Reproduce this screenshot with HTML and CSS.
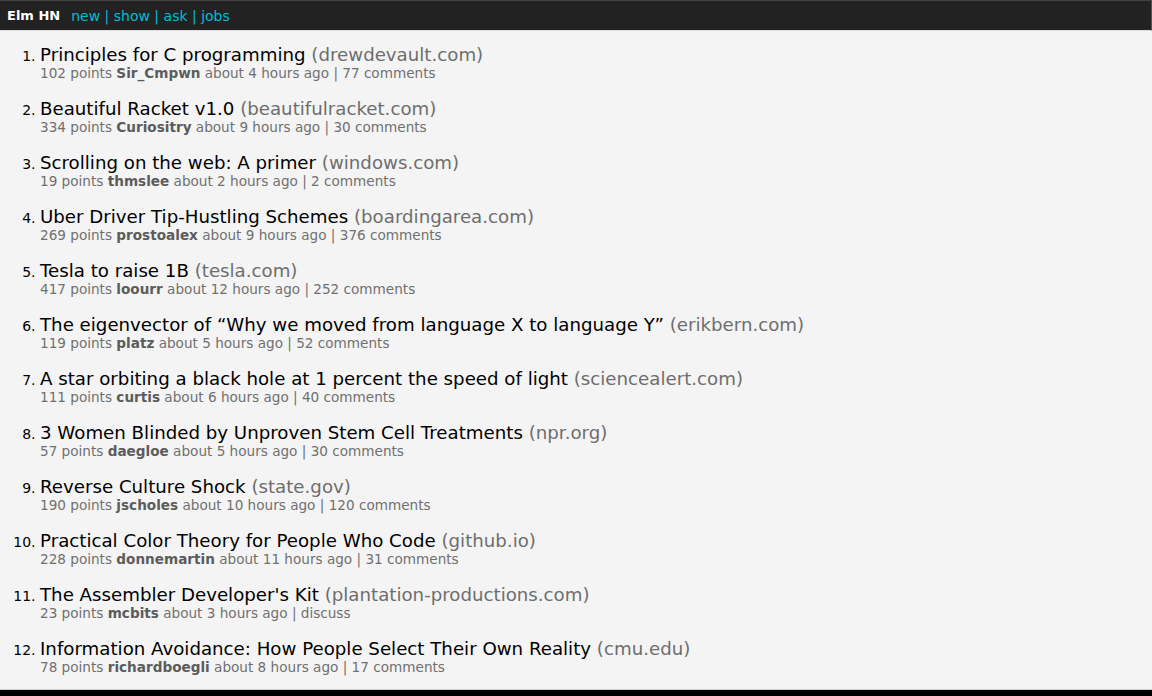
FILE: index.html
```html
<!DOCTYPE html>
<html>
<head>
<meta charset="utf-8">
<link rel="stylesheet" href="styles.css">
</head>
<body>
<header class="topbar">
  <span class="brand">Elm HN</span>
  <nav class="nav"><a href="#">new</a> | <a href="#">show</a> | <a href="#">ask</a> | <a href="#">jobs</a></nav>
</header>
<ol class="stories">
  <li class="story"><div class="title">Principles for C programming <span class="domain">(drewdevault.com)</span></div><div class="meta">102 points <b>Sir_Cmpwn</b> about 4 hours ago | 77 comments</div></li>
  <li class="story"><div class="title">Beautiful Racket v1.0 <span class="domain">(beautifulracket.com)</span></div><div class="meta">334 points <b>Curiositry</b> about 9 hours ago | 30 comments</div></li>
  <li class="story"><div class="title">Scrolling on the web: A primer <span class="domain">(windows.com)</span></div><div class="meta">19 points <b>thmslee</b> about 2 hours ago | 2 comments</div></li>
  <li class="story"><div class="title">Uber Driver Tip-Hustling Schemes <span class="domain">(boardingarea.com)</span></div><div class="meta">269 points <b>prostoalex</b> about 9 hours ago | 376 comments</div></li>
  <li class="story"><div class="title">Tesla to raise 1B <span class="domain">(tesla.com)</span></div><div class="meta">417 points <b>loourr</b> about 12 hours ago | 252 comments</div></li>
  <li class="story"><div class="title">The eigenvector of “Why we moved from language X to language Y” <span class="domain">(erikbern.com)</span></div><div class="meta">119 points <b>platz</b> about 5 hours ago | 52 comments</div></li>
  <li class="story"><div class="title">A star orbiting a black hole at 1 percent the speed of light <span class="domain">(sciencealert.com)</span></div><div class="meta">111 points <b>curtis</b> about 6 hours ago | 40 comments</div></li>
  <li class="story"><div class="title">3 Women Blinded by Unproven Stem Cell Treatments <span class="domain">(npr.org)</span></div><div class="meta">57 points <b>daegloe</b> about 5 hours ago | 30 comments</div></li>
  <li class="story"><div class="title">Reverse Culture Shock <span class="domain">(state.gov)</span></div><div class="meta">190 points <b>jscholes</b> about 10 hours ago | 120 comments</div></li>
  <li class="story"><div class="title">Practical Color Theory for People Who Code <span class="domain">(github.io)</span></div><div class="meta">228 points <b>donnemartin</b> about 11 hours ago | 31 comments</div></li>
  <li class="story"><div class="title">The Assembler Developer's Kit <span class="domain">(plantation-productions.com)</span></div><div class="meta">23 points <b>mcbits</b> about 3 hours ago | discuss</div></li>
  <li class="story"><div class="title">Information Avoidance: How People Select Their Own Reality <span class="domain">(cmu.edu)</span></div><div class="meta">78 points <b>richardboegli</b> about 8 hours ago | 17 comments</div></li>
</ol>
</body>
</html>
```
FILE: styles.css
```css
html {
  background: #000;
}
body {
  margin: 0;
  height: 690px;
  overflow: hidden;
  background: #f4f4f4;
  border-bottom: 1px solid #ccc;
  box-sizing: border-box;
  font-family: "DejaVu Sans", Verdana, sans-serif;
  color: #000;
}
.topbar {
  display: flex;
  align-items: center;
  height: 29px;
  padding: 0 7px;
  background: #222;
  border-top: 1px solid #444;
  border-bottom: 1px solid #ddd;
  border-right: 1px solid #555;
  font-size: 14px;
}
.brand {
  color: #fff;
  font-weight: bold;
  font-size: 13px;
  margin-right: 11px;
}
.nav {
  color: #00bcd4;
}
.nav a {
  color: #00bcd4;
  text-decoration: none;
}
.stories {
  margin: 0;
  padding: 13px 0 0 40px;
}
.story {
  margin-bottom: 17px;
  font-size: 14px;
}
.title {
  font-size: 18.2px;
  line-height: 22px;
}
.domain {
  color: #6e6e6e;
}
.meta {
  font-size: 13.6px;
  line-height: 15px;
  color: #707070;
}
.meta b {
  color: #5c5c5c;
}
```
